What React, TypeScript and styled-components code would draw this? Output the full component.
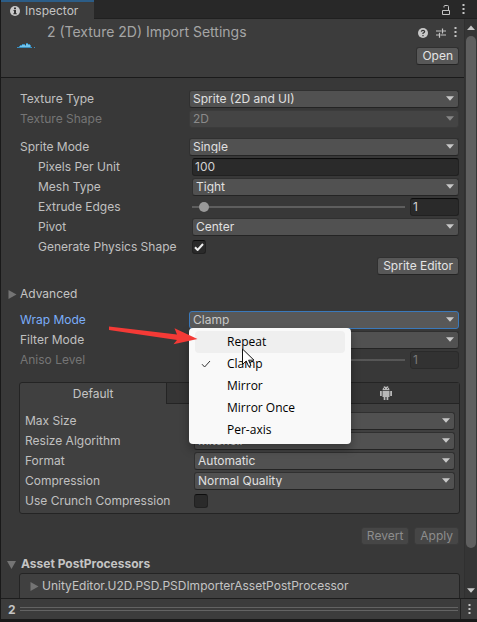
import React, { useId } from "react";
import styled, { createGlobalStyle, css } from "styled-components";

const GlobalStyle = createGlobalStyle`
  *, *::before, *::after { box-sizing: border-box; }
  body {
    margin: 0;
    background: #191919;
    color: #c4c4c4;
    font: 12px/18px Inter, "Liberation Sans", sans-serif;
  }
  button, input, select { font: inherit; color: inherit; margin: 0; }
`;

const Window = styled.main`
  display: flex;
  flex-direction: column;
  height: 100vh;
  padding: 0 0 3px 1px;
  overflow: hidden;
`;

const TabBar = styled.div`
  display: flex;
  flex: none;
  align-items: stretch;
  justify-content: space-between;
  height: 19px;
  background: #282828;
  box-shadow: inset 0 -1px #202020;
`;

const WindowTab = styled.button`
  display: flex;
  align-items: center;
  gap: 5px;
  width: 93px;
  padding: 0 9px;
  border: 0;
  border-top: 2px solid #2c5d87;
  background: #3c3c3c;
`;

const Tools = styled.div<{ $gap: number; $right: number }>`
  display: flex;
  align-items: center;
  gap: ${(p) => p.$gap}px;
  padding-right: ${(p) => p.$right}px;
`;

const IconButton = styled.button`
  display: flex;
  padding: 0;
  border: 0;
  background: none;
`;

const Body = styled.div`
  display: flex;
  flex: 1;
  min-height: 0;
`;

const Page = styled.div`
  flex: 1;
  min-width: 0;
  overflow: hidden;
  background: #383838;
`;

const Header = styled.header`
  display: flex;
  height: 59px;
  padding: 4px 5px 0 16px;
  border-bottom: 1px solid #1a1a1a;
  background: #3c3c3c;
`;

const Thumb = styled.div`
  width: 30px;
  padding-top: 20px;
  line-height: 0;
`;

const Title = styled.h1`
  flex: 1;
  margin: 0;
  color: #a5a5a5;
  font-size: 14px;
  font-weight: 400;
  line-height: 18px;
`;

const HeaderSide = styled.div`
  display: flex;
  flex-direction: column;
  align-items: flex-end;
  gap: 9px;
  padding-top: 4px;
`;

const Button = styled.button`
  height: 18px;
  padding: 0 5px;
  border: 1px solid #303030;
  border-bottom-color: #242424;
  border-radius: 3px;
  background: #585858;
  color: #e4e4e4;
  line-height: 16px;
  &:disabled {
    border-color: #3b3b3b;
    background: #464646;
    color: #8d8d8d;
  }
`;

const Group = styled.section<{ $top: number }>`
  display: flex;
  flex-direction: column;
  gap: 2px;
  padding: ${(p) => p.$top}px 5px 0 19px;
`;

const Line = styled.div<{ $label: number; $indent?: number }>`
  position: relative;
  display: grid;
  grid-template-columns: ${(p) => p.$label}px minmax(0, 1fr);
  align-items: center;
  height: 18px;
  padding-left: ${(p) => p.$indent ?? 0}px;
`;

const Label = styled.label<{ $tone?: "dim" | "active" }>`
  padding-top: 1px;
  white-space: nowrap;
  color: ${(p) => (p.$tone === "dim" ? "#757575" : p.$tone === "active" ? "#7baefa" : "#c0c0c0")};
`;

const SelectBox = styled.div`
  display: grid;
  align-items: center;
  > * { grid-area: 1 / 1; }
  > svg { justify-self: end; margin: 0 5px 1px 0; pointer-events: none; }
`;

const Select = styled.select<{ $open?: boolean }>`
  appearance: none;
  width: 100%;
  height: 18px;
  padding: 0 18px 2px 3px;
  border: 1px solid #303030;
  border-bottom-color: #242424;
  border-radius: 3px;
  background: #515151;
  color: #e0e0e0;
  line-height: 16px;
  &:disabled {
    opacity: 1;
    border-color: #3b3b3b;
    background: #444;
    color: #8a8a8a;
  }
  ${(p) => p.$open && css`
    border-color: #3a79bb;
    background: #585858;
    color: #c8c8c8;
  `}
`;

const TextInput = styled.input`
  width: 100%;
  min-width: 0;
  height: 18px;
  padding: 0 2px;
  border: 1px solid #212121;
  border-top-color: #0d0d0d;
  border-radius: 3px;
  background: #2a2a2a;
  color: #d2d2d2;
  &:disabled {
    border-color: #2a2a2a;
    background: #323232;
    color: #7a7a7a;
  }
`;

const SliderBox = styled.div`
  display: grid;
  grid-template-columns: minmax(0, 1fr) 49px;
  align-items: center;
  gap: 5px;
`;

const Range = styled.input`
  appearance: none;
  width: 100%;
  height: 18px;
  padding: 0 0 0 7px;
  background: linear-gradient(#5e5e5e, #5e5e5e) 0 8px / 100% 2px no-repeat;
  &::-webkit-slider-thumb {
    appearance: none;
    width: 10px;
    height: 10px;
    border-radius: 50%;
    background: #999;
  }
  &:disabled { opacity: 0.8; }
`;

const CheckBox = styled.div`
  display: grid;
  width: 14px;
  height: 14px;
  place-items: center;
  > * { grid-area: 1 / 1; }
  > svg { pointer-events: none; }
`;

const CheckInput = styled.input`
  appearance: none;
  width: 14px;
  height: 14px;
  border: 1px solid #212121;
  border-top-color: #0d0d0d;
  border-radius: 3px;
  background: #2a2a2a;
`;

const Actions = styled.div`
  display: flex;
  justify-content: flex-end;
  gap: 5px;
`;

const Foldout = styled.button<{ $bold?: boolean; $gap: number; $left: number }>`
  display: flex;
  align-items: center;
  gap: ${(p) => p.$gap}px;
  height: 18px;
  padding: 0;
  margin-left: ${(p) => p.$left}px;
  border: 0;
  background: none;
  line-height: 18px;
  font-weight: ${(p) => (p.$bold ? 700 : 400)};
`;

const Menu = styled.ul`
  position: absolute;
  z-index: 2;
  top: 18px;
  left: 169px;
  width: 162px;
  margin: 0;
  padding: 3px 6px;
  border-radius: 4px;
  background: #f9f9f9;
  box-shadow: 0 5px 10px rgba(0, 0, 0, 0.3);
  color: #000;
  font: 12px/22px "Open Sans", "Noto Sans", sans-serif;
  list-style: none;
`;

const MenuItem = styled.button<{ $hover?: boolean }>`
  display: grid;
  grid-template-columns: 32px 1fr;
  align-items: center;
  width: 100%;
  height: 22px;
  padding: 0;
  border: 0;
  border-radius: 4px;
  background: ${(p) => (p.$hover ? "#efefef" : "transparent")};
  text-align: left;
  > svg { margin-left: 6px; }
  > span { grid-column: 2; }
`;

const Pointer = styled.svg`
  position: absolute;
  z-index: 3;
  top: 38px;
  left: 222px;
`;

const RedArrow = styled.svg`
  position: absolute;
  z-index: 3;
  top: 14px;
  left: 88px;
`;

const Panel = styled.section`
  margin: 14px 4px 0 18px;
  border: 1px solid #242424;
  border-radius: 3px;
  background: #404040;
`;

const PlatformTabs = styled.div`
  display: grid;
  grid-template-columns: repeat(3, 1fr);
  height: 21px;
`;

const PlatformTab = styled.button<{ $active?: boolean }>`
  display: flex;
  align-items: center;
  justify-content: center;
  padding: 0;
  border: 0;
  ${(p) => p.$active ? css`
    background: none;
  ` : css`
    border-left: 1px solid #242424;
    border-bottom: 1px solid #242424;
    background: #353535;
  `}
`;

const PanelRows = styled.div`
  display: flex;
  flex-direction: column;
  gap: 2px;
  padding: 7px 4px 4px 5px;
`;

const Processors = styled.div`
  height: 40px;
  margin: 0 4px 0 18px;
  padding: 3px 10px;
  border: 1px solid #242424;
  border-radius: 3px;
  background: #404040;
`;

const ScrollTrack = styled.div`
  display: flex;
  flex-direction: column;
  align-items: center;
  flex: none;
  width: 13px;
  padding: 6px 1px 5px;
  border-left: 1px solid #303030;
  background: #353535;
`;

const ScrollThumb = styled.div`
  flex: 1;
  width: 10px;
  margin: 6px 0 40px;
  border-radius: 5px;
  background: #5f5f5f;
`;

const Footer = styled.footer`
  display: flex;
  align-items: center;
  flex: none;
  height: 21px;
  border-top: 1px solid #1d1d1d;
  background: #3c3c3c;
  font-weight: 700;
`;

const FooterName = styled.span`
  width: 19px;
  padding: 2px 0 0 7px;
`;

const DragHandle = styled.div`
  flex: 1;
  height: 4px;
  border: solid #636363;
  border-width: 1px 0;
`;

const FooterMenu = styled.div`
  display: flex;
  align-items: center;
  justify-content: center;
  align-self: stretch;
  width: 17px;
  margin-left: 2px;
  border-left: 1px solid #222;
`;

const InfoIcon = () => (
  <svg width="10" height="10" viewBox="0 0 10 10">
    <circle cx="5" cy="5" r="5" fill="#c8c8c8" />
    <path d="M4 1.5h2v1.7H4zM3.5 4H6v3.3h.8v1H3.3v-1H4V5h-.5z" fill="#333" />
  </svg>
);

const LockIcon = () => (
  <svg width="8" height="10" viewBox="0 0 8 10" fill="none" stroke="#c4c4c4">
    <path d="M.5 5.5h7v4h-7zM2 2.500V1.500Q2 .5 3 .5h2.500Q6.500.5 6.500 1.500v4" />
  </svg>
);

const DotsIcon = () => (
  <svg width="3" height="11" viewBox="0 0 3 11" fill="#c4c4c4">
    <path d="M.5 0h2v2h-2zM.5 4h2v2h-2zM.5 8h2v2h-2z" />
  </svg>
);

const HelpIcon = () => (
  <svg width="10" height="10" viewBox="0 0 10 10">
    <circle cx="5" cy="5" r="5" fill="#c8c8c8" />
    <path d="M3.300 3.700Q3.500 2.300 5 2.300T6.700 3.600Q6.700 4.500 5 5.200V6M5 7v1.300" fill="none" stroke="#333" strokeWidth="1.200" />
  </svg>
);

const PresetIcon = () => (
  <svg width="10" height="10" viewBox="0 0 10 10" fill="none" stroke="#c4c4c4" strokeWidth="1.200">
    <path d="M0 3h5.500M6.500 3H10M6.500.5v5M0 7h3.500M4.500 7H10M3.500 4.800v5" />
  </svg>
);

const CloudThumb = () => (
  <svg width="18" height="5" viewBox="0 0 18 5">
    <path d="M0 5V4h2V3h1V2h2V1h3v1h1V0h2v1h2v1h1v2h1v1zM17 4h1v1h-1z" fill="#3a8fc0" />
    <path d="M3 4V3h2V2h3v1h1V1h2v1h2v2z" fill="#72c3ea" />
  </svg>
);

const DownArrow = ({ dim }: { dim?: boolean }) => (
  <svg width="8" height="5" viewBox="0 0 8 5">
    <path d="M0 .3h8L4 4.700z" fill={dim ? "#858585" : "#c8c8c8"} />
  </svg>
);

const FoldIcon = ({ open }: { open?: boolean }) => (
  <svg width="9" height="9" viewBox="0 0 9 9">
    <path d={open ? "M0 1h9L4.500 9z" : "M.5 0v9l8-4.500z"} fill="#747474" />
  </svg>
);

const TickIcon = ({ color, weight }: { color: string; weight: number }) => (
  <svg width="10" height="8" viewBox="0 0 10 8">
    <path d="M1 4.200 3.600 7 9 1" fill="none" stroke={color} strokeWidth={weight} />
  </svg>
);

const DesktopIcon = () => (
  <svg width="14" height="12" viewBox="0 0 14 12" fill="none" stroke="#c4c4c4">
    <path d="M.5.5h13v8H.5zM4 11.500h6M7 9v2" />
  </svg>
);

const AndroidIcon = () => (
  <svg width="12" height="14" viewBox="0 0 12 14" fill="#b8b8b8">
    <path d="M2.500 4Q2.500 1.800 4.300 1L3.500 0h.7l.8.800h2L7.800 0h.7l-.8 1Q9.500 1.800 9.500 4z" />
    <path d="M2.500 4.700h7V11H8.300v3H6.600v-3H5.400v3H3.700v-3H2.500zM0 5h1.800v5H0zM10.200 5H12v5h-1.800z" />
    <path d="M4 2.200h1v.9H4zM7 2.200h1v.9H7z" fill="#353535" />
  </svg>
);

type FieldProps = {
  label: string;
  value?: string;
  indent?: boolean;
  disabled?: boolean;
  open?: boolean;
  kind?: "select" | "text" | "slider" | "check";
  checked?: boolean;
  children?: React.ReactNode;
};

function Field({ label, value = "", indent, disabled, open, kind = "select", checked, children }: FieldProps) {
  const id = useId();
  return (
    <Line $label={indent ? 154 : 169} $indent={indent ? 18 : 0}>
      <Label htmlFor={id} $tone={disabled ? "dim" : open ? "active" : undefined}>{label}</Label>
      {kind === "select" && (
        <SelectBox>
          <Select id={id} disabled={disabled} $open={open} defaultValue={value}>
            <option>{value}</option>
          </Select>
          <DownArrow dim={disabled} />
        </SelectBox>
      )}
      {kind === "text" && <TextInput id={id} defaultValue={value} />}
      {kind === "slider" && (
        <SliderBox>
          <Range id={id} type="range" min={0} max={32} defaultValue={0} disabled={disabled} />
          <TextInput aria-label={`${label} value`} defaultValue={value} disabled={disabled} />
        </SliderBox>
      )}
      {kind === "check" && (
        <CheckBox>
          <CheckInput id={id} type="checkbox" defaultChecked={checked} />
          {checked && <TickIcon color="#eee" weight={2} />}
        </CheckBox>
      )}
      {children}
    </Line>
  );
}

const wrapModes = ["Repeat", "Clamp", "Mirror", "Mirror Once", "Per-axis"];

export default function App() {
  return (
    <Window>
      <GlobalStyle />
      <TabBar>
        <WindowTab><InfoIcon />Inspector</WindowTab>
        <Tools $gap={12} $right={12}>
          <IconButton aria-label="Lock"><LockIcon /></IconButton>
          <IconButton aria-label="Window menu"><DotsIcon /></IconButton>
        </Tools>
      </TabBar>
      <Body>
        <Page>
          <Header>
            <Thumb><CloudThumb /></Thumb>
            <Title>2 (Texture 2D) Import Settings</Title>
            <HeaderSide>
              <Tools $gap={8} $right={2}>
                <IconButton aria-label="Help"><HelpIcon /></IconButton>
                <IconButton aria-label="Presets"><PresetIcon /></IconButton>
                <IconButton aria-label="More"><DotsIcon /></IconButton>
              </Tools>
              <Button>Open</Button>
            </HeaderSide>
          </Header>

          <Group $top={11}>
            <Field label="Texture Type" value="Sprite (2D and UI)" />
            <Field label="Texture Shape" value="2D" disabled />
          </Group>
          <Group $top={10}>
            <Field label="Sprite Mode" value="Single" />
            <Field label="Pixels Per Unit" value="100" kind="text" indent />
            <Field label="Mesh Type" value="Tight" indent />
            <Field label="Extrude Edges" value="1" kind="slider" indent />
            <Field label="Pivot" value="Center" indent />
            <Field label="Generate Physics Shape" kind="check" checked indent />
            <Actions><Button>Sprite Editor</Button></Actions>
          </Group>
          <Group $top={10}>
            <Foldout $gap={3} $left={-12}><FoldIcon />Advanced</Foldout>
          </Group>
          <Group $top={7}>
            <Field label="Wrap Mode" value="Clamp" open>
              <RedArrow width="92" height="24" viewBox="0 0 92 24">
                <path d="M1 2.500 69 10.500 66.500 4.300 89.500 15 65.500 20.300 69 16 1 6z" fill="#f43a36" />
              </RedArrow>
              <Menu>
                {wrapModes.map((mode) => (
                  <li key={mode}>
                    <MenuItem $hover={mode === "Repeat"}>
                      {mode === "Clamp" && <TickIcon color="#333" weight={1} />}
                      <span>{mode}</span>
                    </MenuItem>
                  </li>
                ))}
              </Menu>
              <Pointer width="13" height="20" viewBox="0 0 13 20">
                <path d="M.5 1v15.500l3.700-3.500 2.500 5.500 2.300-1-2.400-5.300H12z" fill="#fff" stroke="#111" />
              </Pointer>
            </Field>
            <Field label="Filter Mode" value="Bilinear" />
            <Field label="Aniso Level" value="1" kind="slider" disabled />
          </Group>

          <Panel>
            <PlatformTabs>
              <PlatformTab $active>Default</PlatformTab>
              <PlatformTab aria-label="Desktop"><DesktopIcon /></PlatformTab>
              <PlatformTab aria-label="Android"><AndroidIcon /></PlatformTab>
            </PlatformTabs>
            <PanelRows>
              <Field label="Max Size" value="2048" />
              <Field label="Resize Algorithm" value="Mitchell" />
              <Field label="Format" value="Automatic" />
              <Field label="Compression" value="Normal Quality" />
              <Field label="Use Crunch Compression" kind="check" />
            </PanelRows>
          </Panel>

          <Group $top={13}>
            <Actions>
              <Button disabled>Revert</Button>
              <Button disabled>Apply</Button>
            </Actions>
          </Group>
          <Group $top={10}>
            <Foldout $bold $gap={5} $left={-13}><FoldIcon open />Asset PostProcessors</Foldout>
          </Group>
          <Processors>
            <Foldout $gap={3} $left={0}><FoldIcon />UnityEditor.U2D.PSD.PSDImporterAssetPostProcessor</Foldout>
          </Processors>
        </Page>
        <ScrollTrack>
          <svg width="8" height="5" viewBox="0 0 8 5"><path d="M0 5h8L4 .5z" fill="#c4c4c4" /></svg>
          <ScrollThumb />
          <DownArrow />
        </ScrollTrack>
      </Body>
      <Footer>
        <FooterName>2</FooterName>
        <DragHandle />
        <FooterMenu><IconButton aria-label="Preview menu"><DotsIcon /></IconButton></FooterMenu>
      </Footer>
    </Window>
  );
}
